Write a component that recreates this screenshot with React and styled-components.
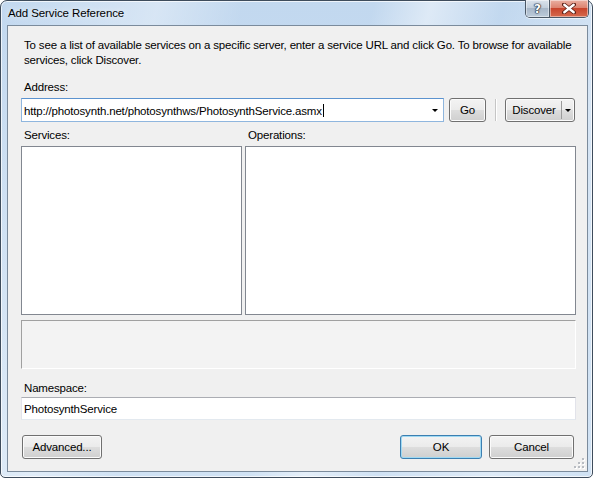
import React from 'react';
import styled, { createGlobalStyle } from 'styled-components';

const GlobalStyle = createGlobalStyle`
  body {
    margin: 0;
    background: #ffffff;
    font-family: "Liberation Sans", Arial, sans-serif;
    font-size: 11.5px;
    color: #000000;
  }
  * {
    box-sizing: border-box;
  }
`;

const Window = styled.div`
  width: 593px;
  height: 478px;
  display: flex;
  flex-direction: column;
  padding: 0 4px 5px 6px;
  border: 1px solid #3e4c5c;
  border-radius: 7px 7px 5px 5px;
  background:
    linear-gradient(105deg, rgba(255, 255, 255, 0) 0%, rgba(255, 255, 255, 0.35) 22%, rgba(255, 255, 255, 0) 34%,
      rgba(255, 255, 255, 0) 52%, rgba(255, 255, 255, 0.45) 60%, rgba(255, 255, 255, 0) 70%,
      rgba(255, 255, 255, 0.3) 86%, rgba(255, 255, 255, 0) 100%),
    linear-gradient(180deg, #c2d8ef 0%, #d0e2f4 100%);
  box-shadow: inset 0 0 0 1px rgba(255, 255, 255, 0.7);
`;

const TitleBar = styled.div`
  height: 24px;
  display: flex;
  align-items: flex-start;
  justify-content: space-between;
`;

const Title = styled.span`
  padding-left: 1px;
  line-height: 25px;
  font-size: 11.5px;
  letter-spacing: -0.1px;
  text-shadow: 0 0 6px rgba(255, 255, 255, 0.9);
`;

const CaptionGroup = styled.div`
  display: flex;
  margin-top: -1px;
  margin-right: -1px;
  border: 1px solid #4b5866;
  border-top: none;
  border-radius: 0 0 5px 5px;
  overflow: hidden;
  box-shadow: 0 1px 0 rgba(255, 255, 255, 0.6);
`;

const CaptionButton = styled.div`
  width: ${(p) => p.$w}px;
  height: 17px;
  display: flex;
  align-items: center;
  justify-content: center;
  background: ${(p) =>
    p.$close
      ? 'linear-gradient(180deg, #eab0a2 0%, #dd8470 45%, #c8452c 50%, #d66a4e 100%)'
      : 'linear-gradient(180deg, #dbe3ec 0%, #c3cfdc 45%, #a8b7c8 50%, #bccbda 100%)'};
  box-shadow: inset 0 0 0 1px rgba(255, 255, 255, 0.45);
  & + & {
    border-left: 1px solid #4b5866;
  }
`;

const HelpGlyph = styled.span`
  font-family: "DejaVu Sans", sans-serif;
  font-weight: bold;
  font-size: 12px;
  line-height: 12px;
  color: #ffffff;
  text-shadow: 0 0 1px #1f2a38, 0 0 1px #1f2a38, 0 0 1px #1f2a38, 0 0 2px #1f2a38;
`;

const Client = styled.div`
  flex: 1;
  position: relative;
  display: flex;
  flex-direction: column;
  padding: 12px 11px 0 13px;
  border: 1px solid #7b8b9c;
  background: #f0f0f0;
`;

const Intro = styled.p`
  margin: 0;
  padding-left: 3px;
  line-height: 15px;
  letter-spacing: -0.17px;
`;

const Label = styled.div`
  margin-top: ${(p) => p.$gap}px;
  padding-left: 3px;
  line-height: 15px;
  letter-spacing: -0.17px;
`;

const AddressRow = styled.div`
  display: flex;
  align-items: center;
  margin: 3px 1px 0 0;
  height: 24px;
`;

const Combo = styled.div`
  flex: 1;
  height: 24px;
  display: flex;
  align-items: center;
  padding: 0 5px 0 2px;
  background: #ffffff;
  border: 1px solid #8fb6de;
  border-top-color: #5c93cf;
`;

const ComboText = styled.span`
  flex: 1;
  letter-spacing: -0.17px;
  white-space: nowrap;
`;

const Caret = styled.span`
  display: inline-block;
  width: 1px;
  height: 13px;
  margin-left: 1px;
  vertical-align: -2px;
  background: #000000;
`;

const Arrow = styled.span`
  width: 0;
  height: 0;
  border-left: ${(p) => p.$size}px solid transparent;
  border-right: ${(p) => p.$size}px solid transparent;
  border-top: ${(p) => p.$size}px solid #000000;
`;

const Button = styled.button`
  width: ${(p) => p.$w}px;
  height: 24px;
  margin-left: ${(p) => p.$ml || 0}px;
  padding: 0;
  display: flex;
  align-items: center;
  justify-content: center;
  font: inherit;
  letter-spacing: -0.17px;
  color: #000000;
  border: 1px solid ${(p) => (p.$default ? '#3c7fb1' : '#707070')};
  border-radius: 3px;
  background: linear-gradient(180deg, #f3f3f3 0%, #ebebeb 48%, #dddddd 52%, #cfcfcf 100%);
  box-shadow: inset 0 0 0 1px ${(p) => (p.$default ? '#9fd9f3' : '#fbfbfb')};
`;

const Separator = styled.div`
  width: 2px;
  height: 22px;
  margin-left: 9px;
  border-left: 1px solid #c5c5c5;
  border-right: 1px solid #ffffff;
`;

const SplitLabel = styled.span`
  flex: 1;
  text-align: center;
  padding-left: 1px;
`;

const SplitDivider = styled.span`
  align-self: stretch;
  width: 1px;
  margin: 2px 0;
  background: #9a9a9a;
`;

const SplitArrow = styled.span`
  width: 12px;
  display: flex;
  justify-content: center;
`;

const Columns = styled.div`
  display: flex;
  gap: 3px;
`;

const Column = styled.div`
  display: flex;
  flex-direction: column;
  flex: ${(p) => (p.$w ? `0 0 ${p.$w}px` : '1')};
`;

const ListBox = styled.div`
  margin-top: 3px;
  height: 169px;
  background: #ffffff;
  border: 1px solid #828790;
`;

const Description = styled.div`
  margin-top: 5px;
  height: 49px;
  background: #f3f3f3;
  border: 1px solid #ffffff;
  border-top-color: #a0a0a0;
  border-left-color: #a0a0a0;
`;

const TextBox = styled.div`
  margin-top: 1px;
  height: 23px;
  display: flex;
  align-items: center;
  padding-left: 2px;
  letter-spacing: -0.17px;
  background: #ffffff;
  border: 1px solid #e2e3ea;
  border-top-color: #abadb3;
  border-bottom-color: #e3e9ef;
`;

const Footer = styled.div`
  display: flex;
  align-items: center;
  justify-content: space-between;
  margin-top: 15px;
  padding: 0 2px 0 1px;
`;

const ButtonGroup = styled.div`
  display: flex;
  gap: 7px;
`;

const Grip = styled.svg`
  position: absolute;
  right: 2px;
  bottom: 2px;
`;

function ResizeGrip() {
  const dots = [
    [8, 0],
    [4, 4],
    [8, 4],
    [0, 8],
    [4, 8],
    [8, 8],
  ];
  return (
    <Grip width="11" height="11" viewBox="0 0 11 11">
      {dots.map(([x, y]) => (
        <g key={`${x}-${y}`}>
          <rect x={x + 1} y={y + 1} width="2" height="2" fill="#ffffff" />
          <rect x={x} y={y} width="2" height="2" fill="#b8bcc2" />
        </g>
      ))}
    </Grip>
  );
}

function CloseGlyph() {
  return (
    <svg width="14" height="11" viewBox="0 0 14 11">
      <path d="M2 1.5 L12 9.5 M12 1.5 L2 9.5" stroke="#5a1e14" strokeWidth="4" strokeLinecap="round" />
      <path d="M2.3 1.8 L11.7 9.2 M11.7 1.8 L2.3 9.2" stroke="#ffffff" strokeWidth="2.4" strokeLinecap="round" />
    </svg>
  );
}

export default function App() {
  return (
    <>
      <GlobalStyle />
      <Window>
        <TitleBar>
          <Title>Add Service Reference</Title>
          <CaptionGroup>
            <CaptionButton $w={23}>
              <HelpGlyph>?</HelpGlyph>
            </CaptionButton>
            <CaptionButton $w={39} $close>
              <CloseGlyph />
            </CaptionButton>
          </CaptionGroup>
        </TitleBar>

        <Client>
          <Intro>
            To see a list of available services on a specific server, enter a service URL and click Go. To browse for
            available services, click Discover.
          </Intro>

          <Label $gap={12}>Address:</Label>
          <AddressRow>
            <Combo>
              <ComboText>
                http://photosynth.net/photosynthws/PhotosynthService.asmx
                <Caret />
              </ComboText>
              <Arrow $size={3.5} />
            </Combo>
            <Button $w={37} $ml={5}>
              Go
            </Button>
            <Separator />
            <Button $w={70} $ml={8}>
              <SplitLabel>Discover</SplitLabel>
              <SplitDivider />
              <SplitArrow>
                <Arrow $size={3} />
              </SplitArrow>
            </Button>
          </AddressRow>

          <Columns>
            <Column $w={221}>
              <Label $gap={6}>Services:</Label>
              <ListBox />
            </Column>
            <Column>
              <Label $gap={6}>Operations:</Label>
              <ListBox />
            </Column>
          </Columns>

          <Description />

          <Label $gap={12}>Namespace:</Label>
          <TextBox>PhotosynthService</TextBox>

          <Footer>
            <Button $w={80}>Advanced...</Button>
            <ButtonGroup>
              <Button $w={82} $default>
                OK
              </Button>
              <Button $w={85}>Cancel</Button>
            </ButtonGroup>
          </Footer>

          <ResizeGrip />
        </Client>
      </Window>
    </>
  );
}
